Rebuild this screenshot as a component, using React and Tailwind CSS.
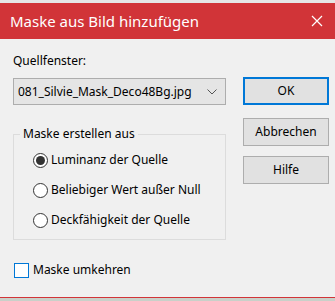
import React from 'react';

const font = { fontFamily: '"Noto Sans", "Open Sans", sans-serif' };

const Radio = ({ checked, label }) => (
  <div className="flex items-center h-[20px]">
    <span className="w-[15px] h-[15px] rounded-full border border-[#333] bg-white flex items-center justify-center">
      {checked && <span className="w-[9px] h-[9px] rounded-full bg-[#333]" />}
    </span>
    <span className="ml-[3px] text-[12px] text-black">{label}</span>
  </div>
);

const Button = ({ children, primary }) => (
  <button
    className={`w-[86px] h-[28px] bg-[#e1e1e1] text-[12px] text-black flex items-center justify-center ${
      primary ? 'border-2 border-[#0078d7]' : 'border border-[#adadad]'
    }`}
  >
    {children}
  </button>
);

export default function App() {
  return (
    <div className="w-[335px] h-[301px] bg-[#f0f0f0] flex flex-col overflow-hidden" style={font}>
      <div className="h-[3px] bg-[#e6e6e6]" />
      <div className="h-[36px] bg-[#d13438] flex items-center justify-between pl-[10px] pr-[10px]">
        <span className="text-white text-[15px]">Maske aus Bild hinzufügen</span>
        <svg width="12" height="12" viewBox="0 0 12 12" className="mr-[2px]">
          <path d="M1 1 L11 11 M11 1 L1 11" stroke="white" strokeWidth="1.2" />
        </svg>
      </div>

      <div className="flex-1 flex pl-[13px] pr-[6px]">
        <div className="w-[213px] flex flex-col">
          <div className="mt-[14px] text-[12px] text-black leading-[16px]">Quellfenster:</div>
          <div className="mt-[9px] h-[27px] bg-[#e5e5e5] border border-[#adadad] flex items-center justify-between pl-[4px] pr-[8px]">
            <span className="text-[12px] text-black">081_Silvie_Mask_Deco48Bg.jpg</span>
            <svg width="10" height="6" viewBox="0 0 10 6">
              <path d="M0.5 0.5 L5 5 L9.5 0.5" stroke="#555" fill="none" strokeWidth="1" />
            </svg>
          </div>

          <fieldset className="mt-[22px] h-[113px] border border-[#dcdcdc] p-0">
            <legend className="text-[12px] text-black ml-[6px] px-[3px] leading-[14px]">Maske erstellen aus</legend>
            <div className="flex flex-col gap-[10px] pl-[19px] pt-[9px]">
              <Radio checked label="Luminanz der Quelle" />
              <Radio label="Beliebiger Wert außer Null" />
              <Radio label="Deckfähigkeit der Quelle" />
            </div>
          </fieldset>

          <div className="mt-[21px] flex items-center">
            <span className="w-[15px] h-[15px] border border-[#0078d7] bg-white ml-[1px]" />
            <span className="ml-[4px] text-[12px] text-black">Maske umkehren</span>
          </div>
        </div>

        <div className="ml-[17px] flex flex-col mt-[38px]">
          <Button primary>OK</Button>
          <div className="mt-[13px]">
            <Button>Abbrechen</Button>
          </div>
          <div className="mt-[10px]">
            <Button>Hilfe</Button>
          </div>
        </div>
      </div>

      <div className="h-[1px] bg-[#d13438]" />
      <div className="h-[3px] bg-[#c9d0c9]" />
    </div>
  );
}
